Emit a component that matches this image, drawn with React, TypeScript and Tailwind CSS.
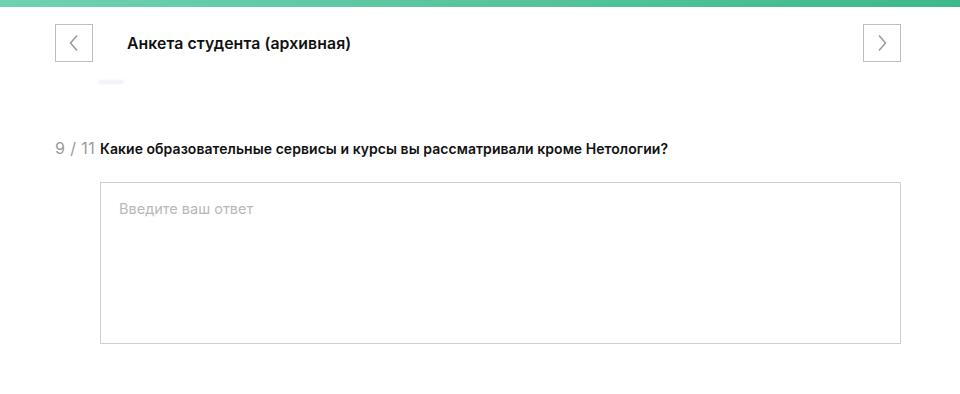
export default function App() {
  return (
    <div className="w-[960px] h-[394px] bg-white overflow-hidden font-['Inter','Noto_Sans',sans-serif]">
      <div className="h-[7px] bg-gradient-to-r from-[#70d1b0] to-[#3cb98a]" />
      <div className="flex items-center pl-[55px] pr-[59px] pt-[17px]">
        <button type="button" className="w-[38px] h-[38px] border border-[#bdbdbd] flex items-center justify-center text-[#9a9a9a]">
          <svg width="12" height="18" viewBox="0 0 12 18" fill="none" stroke="currentColor" strokeWidth="1.5">
            <path d="M9 1.5 2.5 9 9 16.5" />
          </svg>
        </button>
        <h1 className="ml-[34px] mt-[1px] text-[15.8px] font-semibold text-[#111] tracking-[0.1px]">Анкета студента (архивная)</h1>
        <button type="button" className="ml-auto w-[38px] h-[38px] border border-[#bdbdbd] flex items-center justify-center text-[#9a9a9a]">
          <svg width="12" height="18" viewBox="0 0 12 18" fill="none" stroke="currentColor" strokeWidth="1.5">
            <path d="M3 1.5 9.5 9 3 16.5" />
          </svg>
        </button>
      </div>
      <div className="ml-[98px] mt-[18px] w-[26px] h-[4px] rounded-full bg-[#f1f0fb] blur-[1px]" />
      <div className="flex items-baseline px-[55px] mt-[52px]">
        <span className="text-[16px] text-[#9a9a9a] w-[45px] whitespace-nowrap tracking-[0.4px]">9 / 11</span>
        <span className="text-[14px] font-semibold text-[#111] tracking-[0.05px]">Какие образовательные сервисы и курсы вы рассматривали кроме Нетологии?</span>
      </div>
      <div className="ml-[100px] mt-[22px] w-[801px] h-[162px] border border-[#cfcfcf] px-[18px] pt-[15px]">
        <textarea
          placeholder="Введите ваш ответ"
          className="w-full h-full resize-none outline-none text-[14.5px] text-[#111] placeholder:text-[#b8b8b8] bg-transparent"
        />
      </div>
    </div>
  );
}
